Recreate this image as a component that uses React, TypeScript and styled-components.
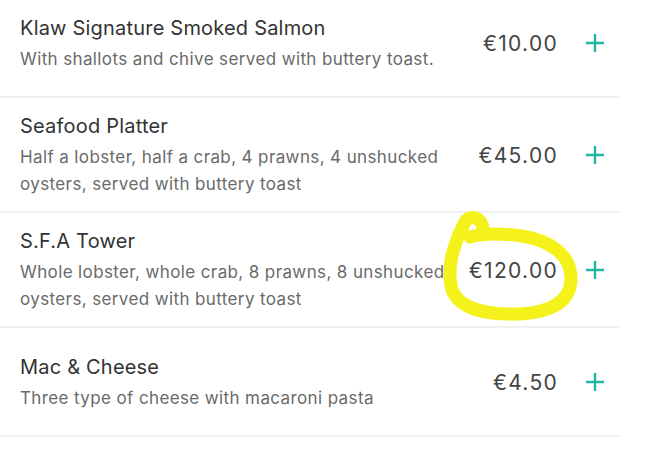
import React from "react";
import styled, { createGlobalStyle } from "styled-components";

const Global = createGlobalStyle`
  html, body { margin: 0; padding: 0; background: #ffffff; }
  body { overflow: hidden; font-family: Inter, "Noto Sans", sans-serif; }
`;

const Page = styled.div`
  position: relative;
  width: 650px;
  height: 452px;
  overflow: hidden;
  background: #fff;
`;

const List = styled.div`
  width: 620px;
  margin-top: -11px;
  display: flex;
  flex-direction: column;
`;

const Row = styled.div`
  display: flex;
  align-items: center;
  min-height: 109px;
  box-sizing: border-box;
  padding: 14px 0 13px 20px;
  border-bottom: 2px solid #f1f1f1;
`;

const Info = styled.div`
  width: 430px;
  display: flex;
  flex-direction: column;
  gap: 4px;
`;

const Title = styled.div`
  font-size: 20px;
  line-height: 28px;
  color: #333;
  letter-spacing: 0.2px;
`;

const Desc = styled.div`
  font-size: 17px;
  line-height: 27px;
  color: #6a6a6a;
  letter-spacing: 0.38px;
`;

const Price = styled.div`
  margin-left: auto;
  font-size: 21px;
  color: #444;
  letter-spacing: 1.3px;
`;

const Add = styled.div`
  width: 22px;
  height: 22px;
  margin: 0 14px 0 26px;
  display: flex;
  align-items: center;
  justify-content: center;
`;

const Highlight = styled.svg`
  position: absolute;
  left: 0;
  top: 0;
  pointer-events: none;
`;

const items = [
  { t: "Klaw Signature Smoked Salmon", d: "With shallots and chive served with buttery toast.", p: "€10.00" },
  { t: "Seafood Platter", d: "Half a lobster, half a crab, 4 prawns, 4 unshucked oysters, served with buttery toast", p: "€45.00" },
  { t: "S.F.A Tower", d: "Whole lobster, whole crab, 8 prawns, 8 unshucked oysters, served with buttery toast", p: "€120.00" },
  { t: "Mac & Cheese", d: "Three type of cheese with macaroni pasta", p: "€4.50" },
];

const PlusIcon = () => (
  <svg width="20" height="20" viewBox="0 0 20 20">
    <path d="M10 1 V19 M1 10 H19" stroke="#22b5a3" strokeWidth="2.4" fill="none" />
  </svg>
);

export default function App() {
  return (
    <Page>
      <Global />
      <List>
        {items.map((it) => (
          <Row key={it.t}>
            <Info>
              <Title>{it.t}</Title>
              <Desc>{it.d}</Desc>
            </Info>
            <Price>{it.p}</Price>
            <Add>
              <PlusIcon />
            </Add>
          </Row>
        ))}
      </List>
      <Highlight width="650" height="452" viewBox="0 0 650 452">
        <path
          d="M483 228 C481 216, 468 214, 464 224 C454 244, 446 266, 452 290 C460 309, 484 315, 520 314 C553 312, 570 301, 571 280 C572 256, 552 241, 522 236 C500 233, 484 233, 470 237"
          stroke="#f4f21a"
          strokeWidth="13"
          strokeLinecap="round"
          strokeLinejoin="round"
          fill="none"
        />
      </Highlight>
    </Page>
  );
}
